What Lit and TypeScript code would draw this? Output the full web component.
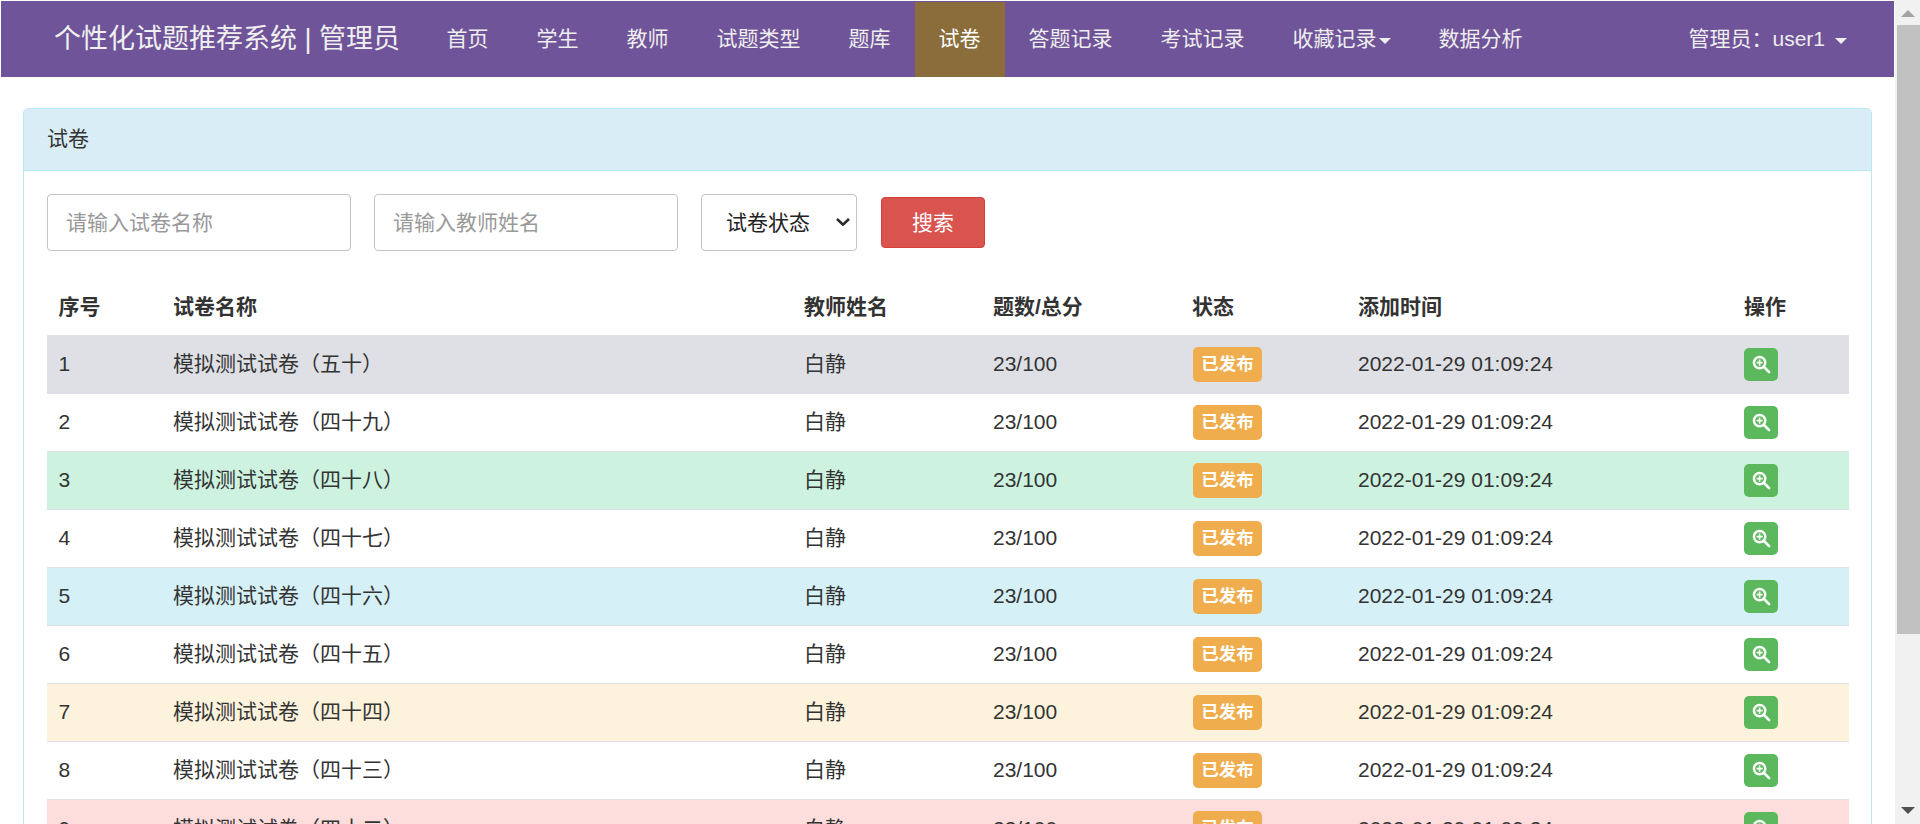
import { LitElement, html, css, svg } from "lit";
import { customElement } from "lit/decorators.js";

const NAV = ["首页", "学生", "教师", "试题类型", "题库", "试卷", "答题记录", "考试记录", "收藏记录", "数据分析"];
const NUMS = ["五十", "四十九", "四十八", "四十七", "四十六", "四十五", "四十四", "四十三", "四十二"];
const TONES = ["secondary", "", "success", "", "info", "", "warning", "", "danger"];

const zoomIcon = svg`<svg class="zoom" viewBox="0 0 20 20" aria-hidden="true">
  <circle cx="8" cy="8" r="6" fill="none" stroke="#fff" stroke-width="2.6"/>
  <path d="M12.4 12.4 L18 18" stroke="#fff" stroke-width="2.8" stroke-linecap="round"/>
  <path d="M8 4.8 V11.2 M4.8 8 H11.2" stroke="#fff" stroke-width="1.7"/>
</svg>`;

const chevron = svg`<svg class="chev" viewBox="0 0 14 8" aria-hidden="true">
  <path d="M1 1 L7 6.6 L13 1" fill="none" stroke="#2a2a2a" stroke-width="2.6"/>
</svg>`;

@customElement("app-root")
export class AppRoot extends LitElement {
  static styles = css`
    :host {
      display: flex;
      height: 824px;
      overflow: hidden;
      background: #fff;
      color: #333;
      font: 21px/31.5px "Liberation Sans", "Noto Sans CJK SC", sans-serif;
    }
    * { box-sizing: border-box; }
    .page { flex: 1; min-width: 0; padding: 1px 1px 0; }
    .nav {
      display: flex;
      height: 76px;
      padding: 1px 47px 0 53px;
      background: #6f5499;
      color: #eee;
    }
    .brand { font-size: 27px; margin-right: 22.5px; line-height: 75px; color: #f0f0f0; white-space: nowrap; }
    .item { display: flex; align-items: center; padding: 0 24px 1px; white-space: nowrap; }
    .item.active { background: #8a6d3b; color: #fff; }
    .caret {
      width: 0; height: 0;
      border-top: 6px solid currentColor;
      border-left: 6px solid transparent;
      border-right: 6px solid transparent;
      margin-top: 3px;
    }
    .item .caret { margin-left: 2px; }
    .user { margin-left: auto; display: flex; align-items: center; gap: 10px; padding-bottom: 1px; white-space: nowrap; }
    .card {
      margin: 31px 22px 0 22px;
      border: 1px solid #bce8f1;
      border-radius: 5px;
      height: 760px;
    }
    .card-head {
      height: 62px;
      padding: 0 23px;
      line-height: 60px;
      background: #d9edf7;
      border-bottom: 1px solid #bce8f1;
      border-radius: 4px 4px 0 0;
    }
    .card-body { padding: 23px 22px 23px 23px; }
    .search { display: flex; align-items: center; gap: 23px; height: 57px; margin-bottom: 26px; }
    .field {
      height: 57px;
      border: 1px solid #c9bfc4;
      border-radius: 4px;
      background: #fff;
      font: inherit;
      color: #333;
      outline: none;
    }
    input.field { width: 304px; padding: 0 18px; }
    input.field::placeholder { color: #999; opacity: 1; }
    .pick { position: relative; width: 156px; height: 57px; }
    select.field { width: 100%; padding: 0 24px; color: #222; appearance: none; }
    .chev { position: absolute; right: 7px; top: 24px; width: 14px; height: 8px; pointer-events: none; }
    .go {
      width: 104px;
      height: 51px;
      margin-left: 1px;
      border: 1px solid #d43f3a;
      border-radius: 4px;
      background: #d9534f;
      color: #fff;
      font: inherit;
    }
    table { width: 1802px; table-layout: fixed; border-collapse: collapse; }
    th, td { height: 58px; padding: 0 11px; text-align: left; vertical-align: middle; white-space: nowrap; }
    th { font-weight: 700; padding-top: 2px; }
    td { border-top: 1px solid #dee2e6; }
    th:first-child, td:first-child { padding-left: 11.5px; }
    .c1 { width: 115px; } .c2 { width: 631px; } .c3 { width: 189px; } .c4 { width: 199px; }
    .c5 { width: 166px; } .c6 { width: 386px; } .c7 { width: 116px; }
    tr.secondary td { background: #dee0e5; }
    tr.success td { background: #cdf3e0; }
    tr.info td { background: #d6f0f7; }
    tr.warning td { background: #fdf3dd; }
    tr.danger td { background: #fedddd; }
    .badge {
      display: inline-block;
      width: 69px;
      height: 35px;
      margin-left: 1px;
      border-radius: 5px;
      background: #f0ad4e;
      color: #fff;
      font-size: 17.5px;
      font-weight: 700;
      line-height: 35px;
      text-align: center;
      vertical-align: middle;
    }
    .view {
      display: flex;
      align-items: center;
      justify-content: center;
      width: 34px;
      height: 33px;
      border-radius: 5px;
      background: #5cb85c;
    }
    .zoom { width: 19px; height: 19px; display: block; }
    .bar { position: relative; flex: 0 0 25px; background: #f1f1f1; padding-left: 2px; }
    .thumb { position: absolute; left: 2px; right: 0; top: 25px; height: 609px; background: #c1c1c1; }
    .up, .down { position: absolute; left: 6px; width: 0; height: 0; border-left: 7px solid transparent; border-right: 7px solid transparent; }
    .up { top: 10px; border-bottom: 7px solid #a3a3a3; }
    .down { top: 807px; border-top: 7px solid #505050; }
  `;

  render() {
    return html`
      <div class="page">
        <nav class="nav">
          <div class="brand">个性化试题推荐系统 | 管理员</div>
          ${NAV.map(
            (n) => html`<div class="item ${n === "试卷" ? "active" : ""}">${n}${n === "收藏记录" ? html`<span class="caret"></span>` : ""}</div>`
          )}
          <div class="user">管理员：user1 <span class="caret"></span></div>
        </nav>
        <section class="card">
          <div class="card-head">试卷</div>
          <div class="card-body">
            <div class="search">
              <input class="field" placeholder="请输入试卷名称" />
              <input class="field" placeholder="请输入教师姓名" />
              <div class="pick"><select class="field"><option>试卷状态</option></select>${chevron}</div>
              <button class="go">搜索</button>
            </div>
            <table>
              <colgroup>
                <col class="c1" /><col class="c2" /><col class="c3" /><col class="c4" /><col class="c5" /><col class="c6" /><col class="c7" />
              </colgroup>
              <thead>
                <tr><th>序号</th><th>试卷名称</th><th>教师姓名</th><th>题数/总分</th><th>状态</th><th>添加时间</th><th>操作</th></tr>
              </thead>
              <tbody>
                ${NUMS.map(
                  (n, i) => html`<tr class=${TONES[i]}>
                    <td>${i + 1}</td>
                    <td>模拟测试试卷（${n}）</td>
                    <td>白静</td>
                    <td>23/100</td>
                    <td><span class="badge">已发布</span></td>
                    <td>2022-01-29 01:09:24</td>
                    <td><div class="view">${zoomIcon}</div></td>
                  </tr>`
                )}
              </tbody>
            </table>
          </div>
        </section>
      </div>
      <div class="bar"><span class="up"></span><span class="thumb"></span><span class="down"></span></div>
    `;
  }
}
